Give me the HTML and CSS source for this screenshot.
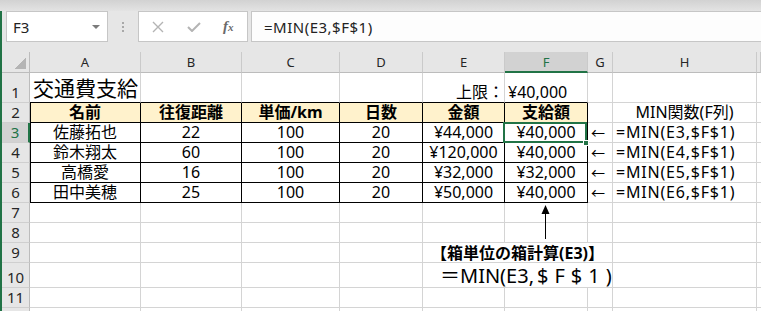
FILE: index.html
```html
<!DOCTYPE html>
<html lang="ja">
<head>
    <meta charset="UTF-8">
    <title>交通費支給</title>
    <link rel="stylesheet" href="styles.css">
</head>
<body>
<div class="window">
    <div class="title-strip"></div>

    <div class="main">
        <!-- Formula bar -->
        <div class="formula-bar">
            <div class="name-box">
                <span>F3</span>
                <span class="drop"></span>
            </div>
            <div class="grip"><span class="dots"></span></div>
            <div class="fx-box">
                <svg class="ic-cancel" width="12" height="12" viewBox="0 0 12 12">
                    <path d="M1 1 L11 11 M11 1 L1 11" stroke="#b4b4b4" stroke-width="1.4" fill="none"/>
                </svg>
                <svg class="ic-enter" width="14" height="10" viewBox="0 0 14 10">
                    <path d="M1 5 L5 9 L13 1" stroke="#b4b4b4" stroke-width="2" fill="none"/>
                </svg>
                <span class="fx">f<span class="fx-x">x</span></span>
            </div>
            <div class="formula">=MIN(E3,$F$1)</div>
        </div>

        <!-- Sheet -->
        <div class="sheet">
            <div class="row col-head">
                <div class="corner"></div>
                <div class="ch">A</div>
                <div class="ch">B</div>
                <div class="ch">C</div>
                <div class="ch">D</div>
                <div class="ch">E</div>
                <div class="ch active">F</div>
                <div class="ch">G</div>
                <div class="ch">H</div>
                <div class="ch"></div>
            </div>

            <div class="row r1">
                <div class="rh">1</div>
                <div class="c top title">交通費支給</div>
                <div class="c top"></div>
                <div class="c top"></div>
                <div class="c top"></div>
                <div class="c top end">上限：</div>
                <div class="c top">¥40,000</div>
                <div class="c"></div>
                <div class="c"></div>
                <div class="c"></div>
            </div>

            <div class="row">
                <div class="rh">2</div>
                <div class="c t first hd">名前</div>
                <div class="c t hd">往復距離</div>
                <div class="c t hd">単価/km</div>
                <div class="c t hd">日数</div>
                <div class="c t hd">金額</div>
                <div class="c t hd">支給額</div>
                <div class="c"></div>
                <div class="c mid">MIN関数(F列)</div>
                <div class="c"></div>
            </div>

            <div class="row">
                <div class="rh active">3</div>
                <div class="c t first mid">佐藤拓也</div>
                <div class="c t mid">22</div>
                <div class="c t mid">100</div>
                <div class="c t mid">20</div>
                <div class="c t mid">¥44,000</div>
                <div class="c t mid current">¥40,000<div class="sel"><span class="handle"></span></div></div>
                <div class="c arrow">←</div>
                <div class="c fn">=MIN(E3,$F$1)</div>
                <div class="c"></div>
            </div>

            <div class="row">
                <div class="rh">4</div>
                <div class="c t first mid">鈴木翔太</div>
                <div class="c t mid">60</div>
                <div class="c t mid">100</div>
                <div class="c t mid">20</div>
                <div class="c t mid">¥120,000</div>
                <div class="c t mid">¥40,000</div>
                <div class="c arrow">←</div>
                <div class="c fn">=MIN(E4,$F$1)</div>
                <div class="c"></div>
            </div>

            <div class="row">
                <div class="rh">5</div>
                <div class="c t first mid">高橋愛</div>
                <div class="c t mid">16</div>
                <div class="c t mid">100</div>
                <div class="c t mid">20</div>
                <div class="c t mid">¥32,000</div>
                <div class="c t mid">¥32,000</div>
                <div class="c arrow">←</div>
                <div class="c fn">=MIN(E5,$F$1)</div>
                <div class="c"></div>
            </div>

            <div class="row">
                <div class="rh">6</div>
                <div class="c t first mid">田中美穂</div>
                <div class="c t mid">25</div>
                <div class="c t mid">100</div>
                <div class="c t mid">20</div>
                <div class="c t mid">¥50,000</div>
                <div class="c t mid">¥40,000</div>
                <div class="c arrow">←</div>
                <div class="c fn">=MIN(E6,$F$1)</div>
                <div class="c"></div>
            </div>

            <div class="row">
                <div class="rh">7</div>
                <div class="c"></div>
                <div class="c"></div>
                <div class="c"></div>
                <div class="c"></div>
                <div class="c"></div>
                <div class="c pin">
                    <svg class="pointer" width="9" height="34" viewBox="0 0 9 34">
                        <polygon points="4.5,0 0.5,9 8.5,9" fill="#000"/>
                        <line x1="4.5" y1="8" x2="4.5" y2="34" stroke="#000" stroke-width="1"/>
                    </svg>
                </div>
                <div class="c"></div>
                <div class="c"></div>
                <div class="c"></div>
            </div>

            <div class="row">
                <div class="rh">8</div>
                <div class="c"></div>
                <div class="c"></div>
                <div class="c"></div>
                <div class="c"></div>
                <div class="c"></div>
                <div class="c"></div>
                <div class="c"></div>
                <div class="c"></div>
                <div class="c"></div>
            </div>

            <div class="row">
                <div class="rh">9</div>
                <div class="c"></div>
                <div class="c"></div>
                <div class="c"></div>
                <div class="c"></div>
                <div class="c note span3">【箱単位の箱計算(E3)】</div>
                <div class="c"></div>
                <div class="c"></div>
            </div>

            <div class="row r10">
                <div class="rh">10</div>
                <div class="c"></div>
                <div class="c"></div>
                <div class="c"></div>
                <div class="c"></div>
                <div class="c big span3">＝MIN(E3,<span class="spread">$F$1</span>)</div>
                <div class="c"></div>
                <div class="c"></div>
            </div>

            <div class="row">
                <div class="rh">11</div>
                <div class="c"></div>
                <div class="c"></div>
                <div class="c"></div>
                <div class="c"></div>
                <div class="c"></div>
                <div class="c"></div>
                <div class="c"></div>
                <div class="c"></div>
                <div class="c"></div>
            </div>

            <!-- row 12 is only just visible -->
            <div class="row">
                <div class="rh"></div>
                <div class="c"></div>
                <div class="c"></div>
                <div class="c"></div>
                <div class="c"></div>
                <div class="c"></div>
                <div class="c"></div>
                <div class="c"></div>
                <div class="c"></div>
                <div class="c"></div>
            </div>
        </div>
    </div>
</div>
</body>
</html>
```

FILE: styles.css
```css
* {
    box-sizing: border-box;
}

body {
    margin: 0;
    background: #ffffff;
    font-family: "Noto Sans", "Noto Sans CJK JP", sans-serif;
    color: #000;
}

.window {
    width: 761px;
    height: 311px;
    overflow: hidden;
}

.title-strip {
    height: 11px;
    background: linear-gradient(#d2d2d2, #e3e3e3);
}

.main {
    border-left: 2px solid #217346;
}

/* formula bar */
.formula-bar {
    display: flex;
    height: 41px;
    padding-left: 4px;
    background: #e6e6e6;
}

.name-box {
    width: 102px;
    height: 31px;
    background: #fff;
    border: 1px solid #c6c6c6;
    display: flex;
    align-items: center;
    justify-content: space-between;
    padding: 0 7px 0 6px;
    font-size: 15px;
    color: #222;
}

.drop {
    width: 0;
    height: 0;
    border-left: 4px solid transparent;
    border-right: 4px solid transparent;
    border-top: 4px solid #7b7b7b;
}

.grip {
    width: 30px;
    height: 31px;
    display: flex;
    align-items: center;
    justify-content: center;
}

.dots {
    width: 2px;
    height: 10px;
    background: repeating-linear-gradient(#a8a8a8 0 2px, transparent 2px 4px);
}

.fx-box {
    width: 110px;
    height: 31px;
    background: #fff;
    border: 1px solid #c6c6c6;
    display: flex;
    align-items: center;
    padding-left: 13px;
}

.ic-enter {
    margin-left: 23px;
}

.fx {
    margin-left: 22px;
    font-family: "Liberation Serif", serif;
    font-style: italic;
    font-weight: bold;
    font-size: 15px;
    color: #6a6a6a;
}

.fx-x {
    font-size: 11px;
}

.formula {
    flex: 1;
    height: 31px;
    margin-left: 3px;
    background: #fdfdfd;
    border: 1px solid #c6c6c6;
    border-right: none;
    display: flex;
    align-items: center;
    padding-left: 12px;
    font-size: 15px;
    letter-spacing: 0.5px;
    color: #222;
}

/* sheet grid */
.row {
    display: grid;
    grid-template-columns: 28px 111px 101px 98px 83px 82px 83px 25px 144px 1fr;
    height: 20px;
}

.col-head {
    height: 21px;
}

.r1 {
    height: 30px;
}

.r10 {
    height: 25px;
}

.corner {
    position: relative;
    background: #e6e6e6;
    border-right: 1px solid #bcbcbc;
    border-bottom: 1px solid #bcbcbc;
}

.corner::after {
    content: "";
    position: absolute;
    right: 3px;
    bottom: 3px;
    width: 12px;
    height: 11px;
    background: linear-gradient(to top left, #b4b4b4 50%, transparent 50%);
}

.ch {
    background: #e6e6e6;
    border-right: 1px solid #cacaca;
    border-bottom: 1px solid #bcbcbc;
    display: flex;
    align-items: center;
    justify-content: center;
    font-size: 13px;
    color: #262626;
}

.ch.active {
    background: #d2d2d2;
    color: #217346;
    border-bottom: 2px solid #217346;
}

.rh {
    background: #e6e6e6;
    border-right: 1px solid #bcbcbc;
    border-bottom: 1px solid #cfcfcf;
    display: flex;
    align-items: flex-end;
    justify-content: center;
    font-size: 15px;
    line-height: 19px;
    color: #262626;
}

.rh.active {
    background: #d2d2d2;
    color: #217346;
    border-right: 2px solid #217346;
}

.c {
    border-right: 1px solid #d4d4d4;
    border-bottom: 1px solid #d4d4d4;
    display: flex;
    align-items: flex-end;
    padding: 0 3px;
    font-size: 16px;
    line-height: 19px;
    white-space: nowrap;
}

.mid {
    justify-content: center;
}

.end {
    justify-content: flex-end;
    padding-right: 0;
}

.top {
    border-bottom-color: #000;
}

.title {
    font-size: 21px;
    line-height: 28px;
}

/* bordered table A2:F6 */
.t {
    border-right-color: #000;
    border-bottom-color: #000;
}

.t.first {
    box-shadow: inset 1px 0 #000;
}

.hd {
    background: #fff2cc;
    font-weight: bold;
    justify-content: center;
}

.arrow {
    font-family: "Noto Sans CJK JP", sans-serif;
    font-size: 14px;
}

.fn {
    letter-spacing: 0.8px;
}

.current {
    position: relative;
}

.sel {
    position: absolute;
    left: -2px;
    top: -1px;
    right: 0;
    bottom: -1px;
    border: 2px solid #217346;
}

.handle {
    position: absolute;
    right: -4px;
    bottom: -5px;
    width: 6px;
    height: 6px;
    background: #217346;
    border: 1px solid #fff;
}

.pin {
    position: relative;
}

.pointer {
    position: absolute;
    left: 36px;
    top: 2px;
}

.span3 {
    grid-column: span 3;
}

.note {
    font-weight: bold;
    line-height: 18px;
    padding-left: 8px;
}

.big {
    font-size: 20px;
    line-height: 23px;
    padding-left: 17px;
}

.spread {
    padding-left: 3px;
    letter-spacing: 6px;
}
```
